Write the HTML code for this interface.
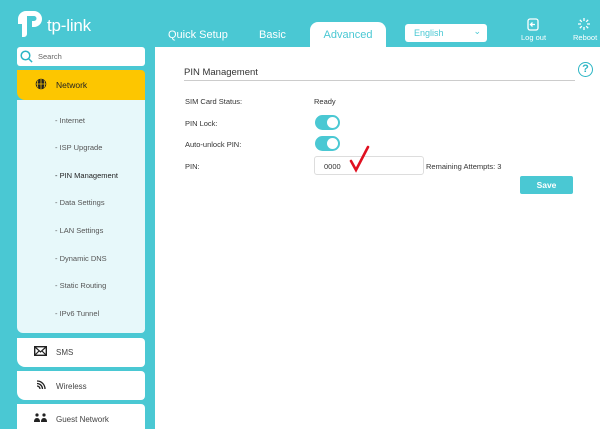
<!DOCTYPE html>
<html><head><style>
*{margin:0;padding:0;box-sizing:border-box}
html,body{width:600px;height:429px;overflow:hidden}
body{background:#4ac8d3;font-family:"Liberation Sans",sans-serif;position:relative;font-size:8px;color:#333}
.a{position:absolute}
.nav{color:#fff;font-size:11px}
.side{background:#fff;border-radius:0 4px 4px 8px}
.sub{color:#555;font-size:7.5px;left:55px}
.lbl{font-size:7.5px;color:#333}
.tog{width:25px;height:15px;border-radius:8px;background:#4ac8d3}
.tog:after{content:"";position:absolute;right:2px;top:2px;width:11px;height:11px;border-radius:50%;background:#fff}
</style></head><body>
<!-- logo -->
<svg class="a" style="left:16px;top:9px" width="30" height="29" viewBox="0 0 30 29"><path d="M2 10h9v15a3 3 0 0 1-3 3H6V15H2z M11 2h7a8 8 0 0 1 0 16h-2v-6h2a2.5 2.5 0 0 0 0-5h-7z M2 10a8 8 0 0 1 8-8h1v8z" fill="#fff"/></svg>
<div class="a" style="left:47px;top:16px;color:#fff;font-size:17px;letter-spacing:-0.2px">tp-link</div>
<div class="a nav" style="left:168px;top:29px">Quick Setup</div>
<div class="a nav" style="left:259px;top:29px">Basic</div>
<div class="a" style="left:310px;top:22px;width:76px;height:26px;background:#fff;border-radius:8px 8px 0 0;color:#4ac8d3;font-size:11px;text-align:center;padding-top:7px">Advanced</div>
<div class="a" style="left:405px;top:24px;width:82px;height:18px;background:#fff;border-radius:3px;color:#4ac8d3;font-size:9px;padding:4px 9px">English<span style="position:absolute;right:6px;top:2px;font-size:9px">⌄</span></div>
<svg class="a" style="left:527px;top:18px" width="12" height="13" viewBox="0 0 12 13"><rect x="1" y="1" width="10" height="11" rx="2" fill="none" stroke="#fff" stroke-width="1.3"/><path d="M8 6.5H4M5.5 4.5L3.5 6.5 5.5 8.5" stroke="#fff" stroke-width="1.3" fill="none"/></svg>
<div class="a" style="left:521px;top:33px;color:#fff;font-size:7.5px">Log out</div>
<svg class="a" style="left:578px;top:18px" width="12" height="12" viewBox="0 0 12 12" stroke="#fff" stroke-width="1.3"><path d="M6 0v3M6 9v3M0 6h3M9 6h3M1.8 1.8l2 2M8.2 8.2l2 2M1.8 10.2l2-2M8.2 3.8l2-2"/></svg>
<div class="a" style="left:573px;top:33px;color:#fff;font-size:7.5px">Reboot</div>
<!-- content -->
<div class="a" style="left:155px;top:47px;width:445px;height:382px;background:#fff"></div>
<div class="a" style="left:184px;top:67px;font-size:9.5px;color:#333">PIN Management</div>
<div class="a" style="left:184px;top:80px;width:391px;height:1px;background:#ccc"></div>
<div class="a" style="left:578px;top:62px;width:15px;height:15px;border:1.5px solid #2bb5c4;border-radius:50%;color:#2bb5c4;font-size:11px;text-align:center;line-height:12px;font-weight:bold">?</div>
<div class="a lbl" style="left:185px;top:97px">SIM Card Status:</div>
<div class="a lbl" style="left:314px;top:97px">Ready</div>
<div class="a lbl" style="left:185px;top:119px">PIN Lock:</div>
<div class="a tog" style="left:315px;top:115px"></div>
<div class="a lbl" style="left:185px;top:140px">Auto-unlock PIN:</div>
<div class="a tog" style="left:315px;top:136px"></div>
<div class="a lbl" style="left:185px;top:162px">PIN:</div>
<div class="a" style="left:314px;top:156px;width:110px;height:19px;border:1px solid #ddd;border-radius:3px;font-size:7.5px;padding:5px 9px">0000</div>
<svg class="a" style="left:348px;top:144px" width="24" height="30" viewBox="0 0 24 30"><path d="M3 17l5 9L20 3" fill="none" stroke="#e01020" stroke-width="2.6" stroke-linecap="round"/></svg>
<div class="a lbl" style="left:426px;top:162px">Remaining Attempts: 3</div>
<div class="a" style="left:520px;top:176px;width:53px;height:18px;background:#4ac8d3;border-radius:2px;color:#fff;font-size:8.5px;text-align:center;line-height:18px;font-weight:bold">Save</div>
<!-- sidebar -->
<div class="a" style="left:17px;top:47px;width:128px;height:19px;background:#fff;border-radius:3px"></div>
<svg class="a" style="left:20px;top:50px" width="13" height="13" viewBox="0 0 13 13"><circle cx="5.5" cy="5.5" r="4.3" fill="none" stroke="#2bb5c4" stroke-width="1.5"/><path d="M8.6 8.6l3.5 3.5" stroke="#2bb5c4" stroke-width="1.5"/></svg>
<div class="a" style="left:38px;top:52px;font-size:7.5px;color:#666">Search</div>
<div class="a" style="left:17px;top:70px;width:128px;height:30px;background:#fdc600;border-radius:0 4px 0 8px"></div>
<svg class="a" style="left:35px;top:78px" width="12" height="12" viewBox="0 0 12 12"><circle cx="6" cy="6" r="5.3" fill="#222"/><path d="M1 6h10M6 1v10M3 2.5q-1.5 3.5 0 7M9 2.5q1.5 3.5 0 7" stroke="#fdc600" stroke-width="0.8" fill="none"/></svg>
<div class="a" style="left:56px;top:80px;font-size:8.5px;color:#222">Network</div>
<div class="a" style="left:17px;top:100px;width:128px;height:233px;background:#e7f8fa;border-radius:0 0 4px 6px"></div>
<div class="a sub" style="top:116px">- Internet</div>
<div class="a sub" style="top:143px">- ISP Upgrade</div>
<div class="a sub" style="top:171px;color:#222">- PIN Management</div>
<div class="a sub" style="top:198px">- Data Settings</div>
<div class="a sub" style="top:226px">- LAN Settings</div>
<div class="a sub" style="top:254px">- Dynamic DNS</div>
<div class="a sub" style="top:281px">- Static Routing</div>
<div class="a sub" style="top:309px">- IPv6 Tunnel</div>
<div class="a side" style="left:17px;top:338px;width:128px;height:29px"></div>
<svg class="a" style="left:34px;top:346px" width="13" height="10" viewBox="0 0 13 10"><rect x="0.7" y="0.7" width="11.6" height="8.6" fill="none" stroke="#222" stroke-width="1.4"/><path d="M1 1l5.5 5L12 1M1 9l4-4M12 9L8 5" stroke="#222" stroke-width="1.2" fill="none"/></svg>
<div class="a" style="left:56px;top:348px;font-size:8px;color:#444">SMS</div>
<div class="a side" style="left:17px;top:371px;width:128px;height:29px"></div>
<svg class="a" style="left:36px;top:380px" width="10" height="10" viewBox="0 0 10 10" fill="none" stroke="#222" stroke-width="1.3"><path d="M1 9v0M1 6a3 3 0 0 1 3 3M1 3.5a5.5 5.5 0 0 1 5.5 5.5M1 1a8 8 0 0 1 8 8"/></svg>
<div class="a" style="left:56px;top:382px;font-size:8px;color:#444">Wireless</div>
<div class="a side" style="left:17px;top:404px;width:128px;height:25px;border-radius:0 4px 0 0"></div>
<svg class="a" style="left:34px;top:413px" width="13" height="10" viewBox="0 0 13 10" fill="#222"><circle cx="3" cy="2" r="1.6"/><circle cx="10" cy="2" r="1.6"/><path d="M0 9q0-4 3-4t3 4zM7 9q0-4 3-4t3 4z"/></svg>
<div class="a" style="left:56px;top:415px;font-size:8px;color:#444">Guest Network</div>
</body></html>
